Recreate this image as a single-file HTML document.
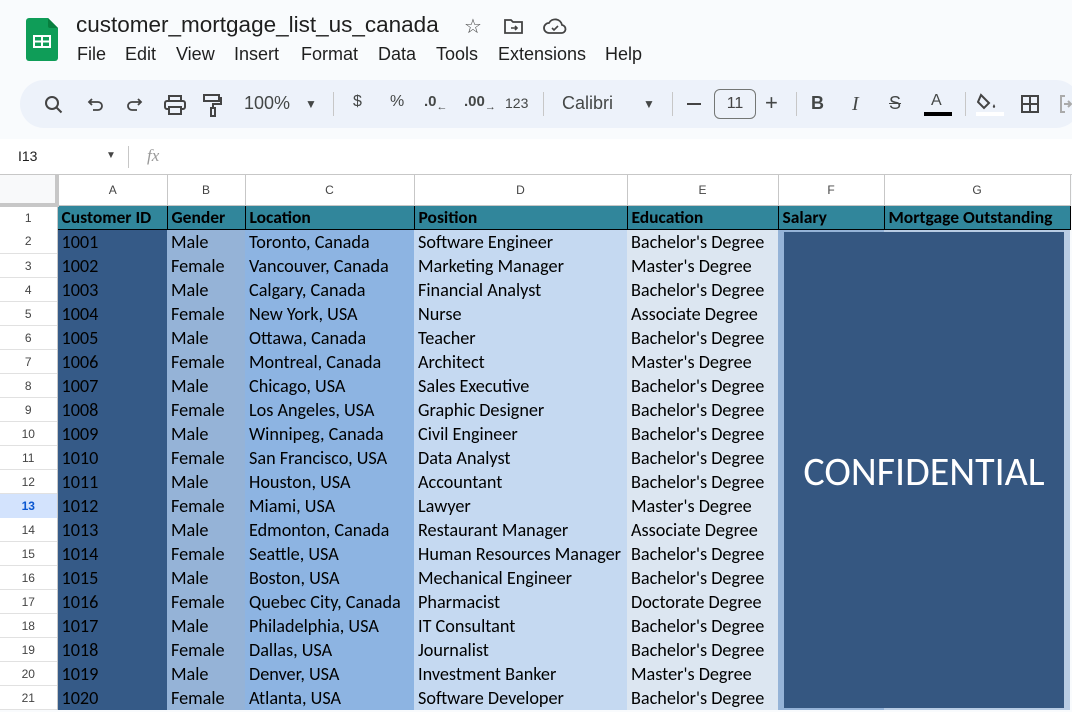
<!DOCTYPE html>
<html><head><meta charset="utf-8"><style>
*{box-sizing:border-box;margin:0;padding:0}
body{width:1072px;height:708px;overflow:hidden;background:#f9fbfd;font-family:"Liberation Sans",sans-serif;position:relative}
.abs{position:absolute}
.title{left:76px;top:12px;font-size:22.5px;color:#1f1f1f}
.menu{top:44px;font-size:18px;color:#1f1f1f}
.tb{left:20px;top:80px;width:1060px;height:48px;background:#edf2fa;border-radius:24px}
.ti{top:93px;font-size:18px;color:#444746}
.sep{top:92px;width:1px;height:24px;background:#c7c7c7}
.fbar{left:0;top:139px;width:1072px;height:36px;background:#fff;border-bottom:1px solid #c7c7c7}
table{position:absolute;left:0;top:175px;border-collapse:collapse;table-layout:fixed;font-family:Calibri,Carlito,"Liberation Sans",sans-serif;font-size:18.2px;color:#000}
tr{height:24px}
td{height:24px;padding:0 0 0 4px;white-space:nowrap;overflow:hidden;line-height:24px}
td > *{display:block}
tr.ch{height:30px}
tr.ch td{height:30px;background:#fff;border-right:1px solid #c7c7c7;border-bottom:1px solid #c7c7c7;text-align:center;font-family:"Liberation Sans",sans-serif;font-size:12px;color:#444;padding:0;line-height:28px}
td.rh{background:#fff linear-gradient(to top,#e1e1e1 1px,transparent 1px);text-align:center;font-family:"Liberation Sans",sans-serif;font-size:12px;color:#444;padding:0;border-right:1px solid #c7c7c7;line-height:24px}
tr.h td{background:#31869b;font-weight:bold;border:1px solid #000;height:23px;line-height:21px;font-size:17.5px}
tr.h td.rh{background:#fff;font-weight:normal;border:none;border-right:1px solid #c7c7c7;font-size:12px}
.a{background:#355a87}.b{background:#95b3d7}.c{background:#8db4e2}.d{background:#c5d9f1}.e{background:#dce6f1}.f{background:#95b3d7}.g{background:#b8cce4}
</style></head><body>
<svg class="abs" style="left:26px;top:18px" width="32" height="43" viewBox="0 0 32 43"><path d="M3 0h19l10 10v30a3 3 0 0 1-3 3H3a3 3 0 0 1-3-3V3a3 3 0 0 1 3-3z" fill="#0f9d58"/><path d="M22 0l10 10h-8a2 2 0 0 1-2-2z" fill="#087f3f"/><rect x="7" y="17" width="18" height="13" fill="#fff"/><rect x="9" y="19" width="6" height="3.5" fill="#0f9d58"/><rect x="17" y="19" width="6" height="3.5" fill="#0f9d58"/><rect x="9" y="24.5" width="6" height="3.5" fill="#0f9d58"/><rect x="17" y="24.5" width="6" height="3.5" fill="#0f9d58"/></svg>
<div class="abs title">customer_mortgage_list_us_canada</div>
<div class="abs" style="left:464px;top:14px;font-size:20px;color:#444">☆</div>
<svg class="abs" style="left:504px;top:18px" width="20" height="17" viewBox="0 0 20 17"><path d="M1 2h6l2 2h9v11H1z" fill="none" stroke="#444" stroke-width="1.8"/><path d="M7 10h6M11 8l2 2-2 2" stroke="#444" stroke-width="1.6" fill="none"/></svg>
<svg class="abs" style="left:543px;top:17px" width="24" height="18" viewBox="0 0 24 18"><path d="M6 16a5 5 0 0 1 0-10 7 7 0 0 1 13 2 4 4 0 0 1-1 8z" fill="none" stroke="#444" stroke-width="1.8"/><path d="M9 11l2 2 4-4" stroke="#444" stroke-width="1.6" fill="none"/></svg>
<div class="abs menu" style="left:77px">File</div><div class="abs menu" style="left:125px">Edit</div><div class="abs menu" style="left:176px">View</div><div class="abs menu" style="left:234px">Insert</div><div class="abs menu" style="left:301px">Format</div><div class="abs menu" style="left:378px">Data</div><div class="abs menu" style="left:436px">Tools</div><div class="abs menu" style="left:498px">Extensions</div><div class="abs menu" style="left:605px">Help</div>
<div class="abs tb"></div>
<svg class="abs" style="left:44px;top:95px" width="20" height="20" viewBox="0 0 20 20"><circle cx="8" cy="8" r="6" fill="none" stroke="#444" stroke-width="2"/><path d="M12.5 12.5l5 5" stroke="#444" stroke-width="2"/></svg>
<svg class="abs" style="left:87px;top:96px" width="18" height="16" viewBox="0 0 18 16"><path d="M5 3L2 6l3 3M2 6h9a4 4 0 0 1 0 8H6" fill="none" stroke="#444" stroke-width="1.8"/></svg>
<svg class="abs" style="left:125px;top:96px" width="18" height="16" viewBox="0 0 18 16"><path d="M13 3l3 3-3 3M16 6H7a4 4 0 0 0 0 8h5" fill="none" stroke="#444" stroke-width="1.8"/></svg>
<svg class="abs" style="left:164px;top:95px" width="22" height="20" viewBox="0 0 22 20"><rect x="5" y="1" width="12" height="5" fill="none" stroke="#444" stroke-width="2"/><rect x="1" y="6" width="20" height="8" rx="2" fill="none" stroke="#444" stroke-width="2"/><rect x="5" y="12" width="12" height="7" fill="#edf2fa" stroke="#444" stroke-width="2"/></svg>
<svg class="abs" style="left:203px;top:94px" width="20" height="24" viewBox="0 0 20 24"><rect x="1" y="1" width="15" height="6" fill="none" stroke="#444" stroke-width="2"/><path d="M16 4h2v6H10v4" fill="none" stroke="#444" stroke-width="2"/><rect x="8" y="14" width="4" height="8" fill="none" stroke="#444" stroke-width="2"/></svg>
<div class="abs ti" style="left:244px">100%</div><div class="abs ti" style="left:305px;font-size:12px;top:97px">▼</div>
<div class="abs sep" style="left:333px"></div>
<div class="abs ti" style="left:353px;font-size:16px">$</div><div class="abs ti" style="left:390px;font-size:16px">%</div>
<div class="abs ti" style="left:424px;font-size:15px;font-weight:bold">.0<sub style="font-size:11px">←</sub></div>
<div class="abs ti" style="left:464px;font-size:15px;font-weight:bold">.00<sub style="font-size:11px">→</sub></div>
<div class="abs ti" style="left:505px;font-size:14px;top:95px">123</div>
<div class="abs sep" style="left:543px"></div>
<div class="abs ti" style="left:562px">Calibri</div><div class="abs ti" style="left:643px;font-size:12px;top:97px">▼</div>
<div class="abs sep" style="left:672px"></div>
<div class="abs" style="left:687px;top:103px;width:14px;height:2px;background:#444"></div>
<div class="abs" style="left:714px;top:89px;width:42px;height:30px;border:1px solid #747775;border-radius:6px;text-align:center;line-height:28px;font-size:16px;color:#444">11</div>
<div class="abs ti" style="left:765px;font-size:22px;top:90px">+</div>
<div class="abs sep" style="left:796px"></div>
<div class="abs ti" style="left:811px;font-weight:bold">B</div><div class="abs ti" style="left:852px;font-style:italic;font-family:'Liberation Serif';font-size:20px">I</div>
<div class="abs ti" style="left:889px;text-decoration:line-through">S</div>
<div class="abs ti" style="left:931px;font-size:16px;top:92px">A</div><div class="abs" style="left:924px;top:112px;width:28px;height:4px;background:#000"></div>
<div class="abs sep" style="left:965px"></div>
<svg class="abs" style="left:977px;top:92px" width="22" height="20" viewBox="0 0 22 20"><path d="M4 3l8 8-5 5-6-6z" fill="none" stroke="#444" stroke-width="2"/><path d="M17 12c-1 2-2 3 0 4 2-1 1-2 0-4z" fill="#444"/></svg>
<div class="abs" style="left:976px;top:112px;width:28px;height:4px;background:#fff"></div>
<svg class="abs" style="left:1021px;top:95px" width="18" height="18" viewBox="0 0 18 18"><path d="M1 1h16v16H1zM9 1v16M1 9h16" fill="none" stroke="#444" stroke-width="2"/></svg>
<svg class="abs" style="left:1060px;top:95px" width="12" height="18" viewBox="0 0 12 18"><path d="M5 1H1v16h4M4 9h7M8 6l3 3-3 3" fill="none" stroke="#aaa" stroke-width="2"/></svg>
<div class="abs fbar"></div>
<div class="abs" style="left:18px;top:148px;font-size:14px;color:#1f1f1f">I13</div>
<div class="abs" style="left:106px;top:150px;font-size:10px;color:#444">▼</div>
<div class="abs" style="left:128px;top:146px;width:1px;height:22px;background:#c7c7c7"></div>
<div class="abs" style="left:147px;top:146px;font-size:17px;color:#999;font-style:italic;font-family:'Liberation Serif'">fx</div>
<table>
<colgroup><col style="width:57px"><col style="width:110px"><col style="width:78px"><col style="width:169px"><col style="width:213px"><col style="width:151px"><col style="width:106px"><col style="width:186px"></colgroup>
<tr class="ch"><td style="background:#f8f9fa;border-right:4px solid #c7c7c7;border-bottom:4px solid #c7c7c7"></td><td>A</td><td>B</td><td>C</td><td>D</td><td>E</td><td>F</td><td>G</td></tr>
<tr class="h"><td class="rh">1</td><td>Customer ID</td><td>Gender</td><td>Location</td><td>Position</td><td>Education</td><td>Salary</td><td>Mortgage Outstanding</td></tr>
<tr><td class="rh">2</td><td class="a">1001</td><td class="b">Male</td><td class="c">Toronto, Canada</td><td class="d">Software Engineer</td><td class="e">Bachelor's Degree</td><td class="f"></td><td class="g"></td></tr>
<tr><td class="rh">3</td><td class="a">1002</td><td class="b">Female</td><td class="c">Vancouver, Canada</td><td class="d">Marketing Manager</td><td class="e">Master's Degree</td><td class="f"></td><td class="g"></td></tr>
<tr><td class="rh">4</td><td class="a">1003</td><td class="b">Male</td><td class="c">Calgary, Canada</td><td class="d">Financial Analyst</td><td class="e">Bachelor's Degree</td><td class="f"></td><td class="g"></td></tr>
<tr><td class="rh">5</td><td class="a">1004</td><td class="b">Female</td><td class="c">New York, USA</td><td class="d">Nurse</td><td class="e">Associate Degree</td><td class="f"></td><td class="g"></td></tr>
<tr><td class="rh">6</td><td class="a">1005</td><td class="b">Male</td><td class="c">Ottawa, Canada</td><td class="d">Teacher</td><td class="e">Bachelor's Degree</td><td class="f"></td><td class="g"></td></tr>
<tr><td class="rh">7</td><td class="a">1006</td><td class="b">Female</td><td class="c">Montreal, Canada</td><td class="d">Architect</td><td class="e">Master's Degree</td><td class="f"></td><td class="g"></td></tr>
<tr><td class="rh">8</td><td class="a">1007</td><td class="b">Male</td><td class="c">Chicago, USA</td><td class="d">Sales Executive</td><td class="e">Bachelor's Degree</td><td class="f"></td><td class="g"></td></tr>
<tr><td class="rh">9</td><td class="a">1008</td><td class="b">Female</td><td class="c">Los Angeles, USA</td><td class="d">Graphic Designer</td><td class="e">Bachelor's Degree</td><td class="f"></td><td class="g"></td></tr>
<tr><td class="rh">10</td><td class="a">1009</td><td class="b">Male</td><td class="c">Winnipeg, Canada</td><td class="d">Civil Engineer</td><td class="e">Bachelor's Degree</td><td class="f"></td><td class="g"></td></tr>
<tr><td class="rh">11</td><td class="a">1010</td><td class="b">Female</td><td class="c">San Francisco, USA</td><td class="d">Data Analyst</td><td class="e">Bachelor's Degree</td><td class="f"></td><td class="g"></td></tr>
<tr><td class="rh">12</td><td class="a">1011</td><td class="b">Male</td><td class="c">Houston, USA</td><td class="d">Accountant</td><td class="e">Bachelor's Degree</td><td class="f"></td><td class="g"></td></tr>
<tr><td class="rh" style="background:#d3e3fd;font-weight:bold;color:#0b57d0">13</td><td class="a">1012</td><td class="b">Female</td><td class="c">Miami, USA</td><td class="d">Lawyer</td><td class="e">Master's Degree</td><td class="f"></td><td class="g"></td></tr>
<tr><td class="rh">14</td><td class="a">1013</td><td class="b">Male</td><td class="c">Edmonton, Canada</td><td class="d">Restaurant Manager</td><td class="e">Associate Degree</td><td class="f"></td><td class="g"></td></tr>
<tr><td class="rh">15</td><td class="a">1014</td><td class="b">Female</td><td class="c">Seattle, USA</td><td class="d">Human Resources Manager</td><td class="e">Bachelor's Degree</td><td class="f"></td><td class="g"></td></tr>
<tr><td class="rh">16</td><td class="a">1015</td><td class="b">Male</td><td class="c">Boston, USA</td><td class="d">Mechanical Engineer</td><td class="e">Bachelor's Degree</td><td class="f"></td><td class="g"></td></tr>
<tr><td class="rh">17</td><td class="a">1016</td><td class="b">Female</td><td class="c">Quebec City, Canada</td><td class="d">Pharmacist</td><td class="e">Doctorate Degree</td><td class="f"></td><td class="g"></td></tr>
<tr><td class="rh">18</td><td class="a">1017</td><td class="b">Male</td><td class="c">Philadelphia, USA</td><td class="d">IT Consultant</td><td class="e">Bachelor's Degree</td><td class="f"></td><td class="g"></td></tr>
<tr><td class="rh">19</td><td class="a">1018</td><td class="b">Female</td><td class="c">Dallas, USA</td><td class="d">Journalist</td><td class="e">Bachelor's Degree</td><td class="f"></td><td class="g"></td></tr>
<tr><td class="rh">20</td><td class="a">1019</td><td class="b">Male</td><td class="c">Denver, USA</td><td class="d">Investment Banker</td><td class="e">Master's Degree</td><td class="f"></td><td class="g"></td></tr>
<tr><td class="rh">21</td><td class="a">1020</td><td class="b">Female</td><td class="c">Atlanta, USA</td><td class="d">Software Developer</td><td class="e">Bachelor's Degree</td><td class="f"></td><td class="g"></td></tr>
</table>
<div class="abs" style="left:784px;top:232px;width:280px;height:476px;background:#355781;color:#fff;font-size:40px;text-align:center;line-height:480px;font-family:Calibri,Carlito,'Liberation Sans',sans-serif">CONFIDENTIAL</div>
</body></html>
